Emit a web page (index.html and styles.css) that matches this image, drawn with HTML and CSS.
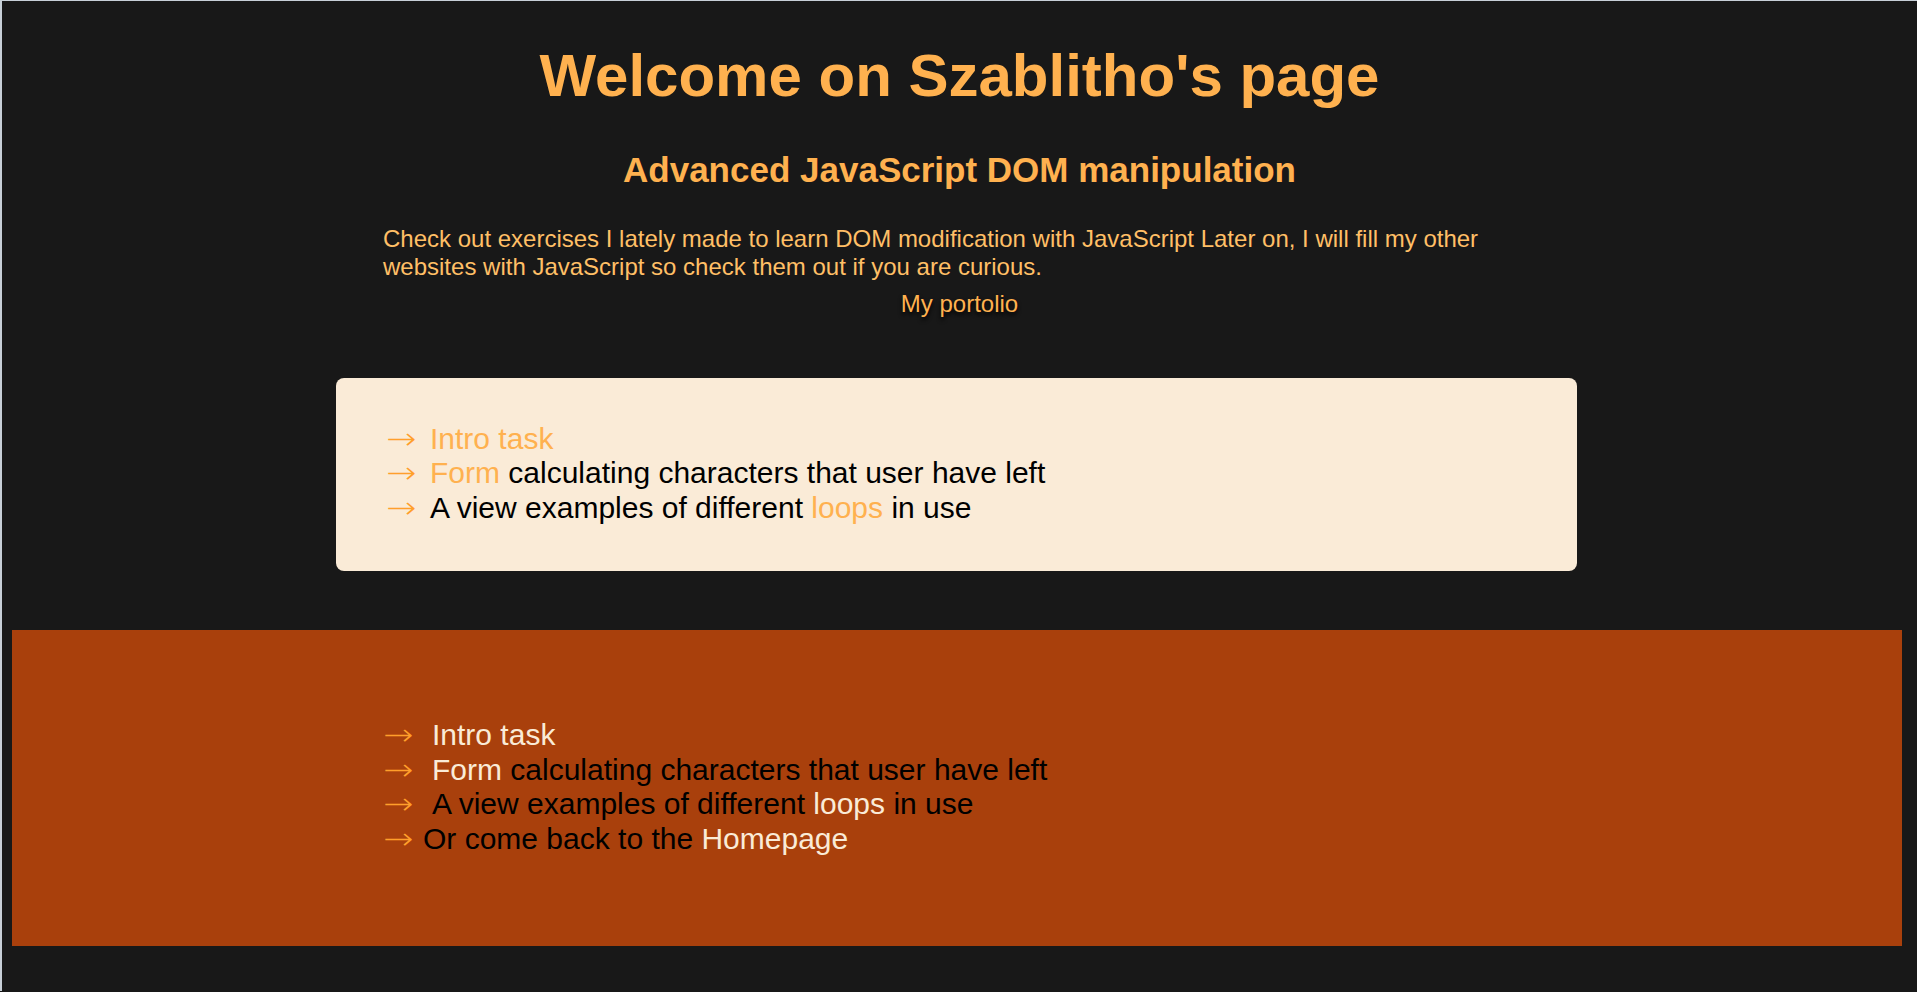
FILE: index.html
```html
<!DOCTYPE html>
<html lang="en">
<head>
<meta charset="utf-8">
<title>Szablitho's page</title>
<link rel="stylesheet" href="styles.css">
</head>
<body>
<div class="frame">
  <header class="intro">
    <h1 class="title">Welcome on Szablitho's page</h1>
    <h2 class="subtitle">Advanced JavaScript DOM manipulation</h2>
    <p class="lead">Check out exercises I lately made to learn DOM modification with JavaScript Later on, I will fill my other websites with JavaScript so check them out if you are curious.</p>
    <a class="portfolio" href="#">My portolio</a>
  </header>

  <section class="card">
    <ul class="tasks">
      <li><span class="arr">→</span><a class="hl" href="#">Intro task</a></li>
      <li><span class="arr">→</span><a class="hl" href="#">Form</a> calculating characters that user have left</li>
      <li><span class="arr">→</span>A view examples of different <a class="hl" href="#">loops</a> in use</li>
    </ul>
  </section>

  <section class="band">
    <ul class="tasks tasks-band">
      <li><span class="arr">→</span><a class="hl" href="#">Intro task</a></li>
      <li><span class="arr">→</span><a class="hl" href="#">Form</a> calculating characters that user have left</li>
      <li><span class="arr">→</span>A view examples of different <a class="hl" href="#">loops</a> in use</li>
      <li><span class="arr arr-tight">→</span>Or come back to the <a class="hl" href="#">Homepage</a></li>
    </ul>
  </section>
</div>
</body>
</html>
```
FILE: styles.css
```css
html, body {
  margin: 0;
  padding: 0;
}

body {
  background: #181818;
  font-family: "Liberation Sans", Arial, sans-serif;
  color: #000;
}

.frame {
  border-top: 1px solid #c7cfd7;
  border-left: 2px solid #c7cfd7;
  min-height: 991px;
  box-sizing: border-box;
  display: flex;
  flex-direction: column;
}

.intro {
  display: flex;
  flex-direction: column;
  align-items: center;
  color: #ffb14f;
}

.title {
  margin: 40px 0 0;
  font-size: 60px;
  font-weight: bold;
  line-height: 69px;
}

.subtitle {
  margin: 40px 0 0;
  font-size: 35px;
  font-weight: bold;
  line-height: 40px;
}

.lead {
  margin: 35px 0 0;
  width: 1153px;
  font-size: 24px;
  line-height: 27.6px;
  color: #ffbf66;
}

.portfolio {
  margin-top: 10px;
  font-size: 24px;
  line-height: 27.6px;
  color: #ffb14f;
  text-decoration: none;
  text-shadow: 0 3px 4px #000;
}

.card {
  margin: 60px 0 0 334px;
  width: 1241px;
  box-sizing: border-box;
  background: #faebd7;
  border-radius: 8px;
  padding: 44px 0 46px 50px;
}

.tasks {
  list-style: none;
  margin: 0;
  padding: 0;
  font-size: 30px;
  line-height: 34.5px;
}

.arr {
  color: #ff9f2b;
  display: inline-block;
  width: 44px;
  line-height: 20px;
  font-family: "DejaVu Sans", sans-serif;
  font-weight: 200;
  transform: scaleX(1.2);
  transform-origin: left center;
}

.hl {
  color: #ffb14f;
  text-decoration: none;
}

.band {
  margin: 59px 0 0 10px;
  width: 1890px;
  height: 316px;
  box-sizing: border-box;
  background: #a9400c;
  padding: 88px 0 0 371px;
}

.tasks-band .hl {
  color: #faebd7;
}

.tasks-band .arr {
  width: 49px;
}

.tasks-band .arr-tight {
  width: 40px;
}
```
